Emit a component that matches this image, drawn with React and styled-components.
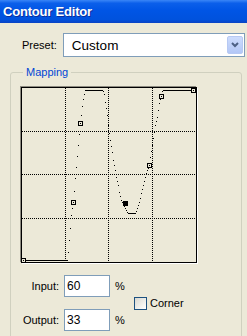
import React from 'react';
import styled, { createGlobalStyle } from 'styled-components';

const GlobalStyle = createGlobalStyle`
  html, body {
    margin: 0;
    padding: 0;
    background: #ece9d8;
    overflow: hidden;
  }
  body {
    font-family: "Liberation Sans", Arial, sans-serif;
  }
`;

const Window = styled.div`
  width: 247px;
  height: 336px;
  overflow: hidden;
  background: #ece9d8;
`;

const TitleBar = styled.div`
  height: 23px;
  padding-left: 3px;
  background: linear-gradient(to bottom, #3a86f7 0%, #0b5fea 14%, #0055e5 45%, #0052dd 85%, #0a43c4 100%);
  color: #fff;
  font: bold 13px/23px "Liberation Sans", Arial, sans-serif;
  letter-spacing: -0.2px;
  text-shadow: 1px 1px 0 #0b2f9c;
`;

const PresetRow = styled.div`
  display: flex;
  align-items: center;
  padding: 10px 0 0 22px;
`;

const Label = styled.span`
  font-size: 11px;
  color: #000;
  text-align: ${p => (p.$right ? 'right' : 'left')};
`;

const Select = styled.div`
  margin-left: 6px;
  width: 182px;
  height: 24px;
  box-sizing: border-box;
  border: 1px solid #7f9db9;
  background: #fff;
  display: flex;
  align-items: center;
`;

const SelectText = styled.span`
  flex: 1;
  padding-left: 8px;
  font-size: 13.5px;
  color: #000;
`;

const DropButton = styled.div`
  width: 16px;
  height: 18px;
  margin-right: 1px;
  box-sizing: border-box;
  border: 1px solid #b7c9f3;
  border-radius: 2px;
  background: linear-gradient(to bottom, #cddcfd, #b3c7f6);
  display: flex;
  align-items: center;
  justify-content: center;
`;

const Group = styled.fieldset`
  margin: 9px 0 0 10px;
  width: 232px;
  height: 300px;
  box-sizing: border-box;
  border: 1px solid #d0d0bf;
  border-radius: 3px;
  padding: 8px 0 0 10px;
  min-width: 0;
`;

const Legend = styled.legend`
  margin-left: 2px;
  padding: 0 3px;
  color: #0046d5;
  font-size: 11px;
  line-height: 13px;
`;

const Plot = styled.div`
  width: 174px;
  height: 174px;
  border: 1px solid #000;
  box-shadow: -1px -1px 0 #8c8a7f, 1px 1px 0 #fff;
  svg {
    display: block;
    overflow: visible;
  }
`;

const Controls = styled.div`
  display: grid;
  grid-template-columns: 38px 46px 14px auto;
  grid-template-rows: 22px 22px;
  column-gap: 5px;
  row-gap: 12px;
  align-items: center;
  margin-top: 12px;
`;

const Field = styled.input`
  width: 46px;
  height: 22px;
  box-sizing: border-box;
  border: 1px solid #7f9db9;
  padding: 0 0 0 2px;
  margin: 0;
  font: 12px "Liberation Sans", Arial, sans-serif;
  color: #000;
  background: #fff;
  outline: none;
`;

const Corner = styled.div`
  grid-column: 4;
  grid-row: 1 / span 2;
  display: flex;
  align-items: center;
  gap: 3px;
`;

const CheckBox = styled.span`
  width: 13px;
  height: 13px;
  box-sizing: border-box;
  border: 1px solid #1c5180;
  background: linear-gradient(135deg, #d8d8d1 0%, #f4f4f0 70%, #fff 100%);
`;

// curve samples in plot pixels (x, y), one dot drawn per column
const curve = [
  [0, 172], [45, 172], [46, 164], [47, 152], [48, 140], [49, 127], [50, 120], [51, 114],
  [52, 103], [53, 90], [54, 79], [55, 68], [56, 57], [57, 46], [58, 35], [59, 27],
  [60, 18], [61, 11], [62, 6], [63, 2], [80, 2], [81, 3], [82, 6], [83, 14], [84, 20],
  [85, 27], [86, 37], [87, 45], [88, 52], [89, 58], [90, 64], [91, 72], [92, 77],
  [93, 82], [94, 89], [95, 93], [96, 97], [97, 104], [98, 108], [99, 112], [100, 114],
  [101, 116], [102, 118], [103, 120], [104, 122], [105, 124], [106, 125], [113, 125],
  [114, 123], [115, 120], [116, 117], [117, 114], [118, 110], [119, 105], [120, 101],
  [121, 97], [122, 93], [123, 89], [124, 85], [125, 82], [126, 80], [127, 77], [128, 69],
  [129, 63], [130, 57], [131, 50], [132, 44], [133, 37], [134, 33], [135, 29], [136, 22],
  [137, 15], [138, 11], [139, 7], [140, 3], [141, 2], [173, 2],
];

const points = [
  [1, 172], [51, 114], [58, 35], [127, 77], [139, 8], [171, 2],
];

const selected = [103, 115];

function valueAt(x) {
  for (let i = 1; i < curve.length; i++) {
    const [x1, y1] = curve[i];
    const [x0, y0] = curve[i - 1];
    if (x <= x1) return Math.round(y0 + ((y1 - y0) * (x - x0)) / (x1 - x0));
  }
  return 2;
}

function ContourGraph() {
  const dots = [];
  for (let x = 0; x < 174; x++) dots.push([x, valueAt(x)]);
  const grid = [43, 86, 130];
  return (
    <svg width="174" height="174" viewBox="0 0 174 174" shapeRendering="crispEdges">
      {grid.map(g => (
        <line key={'v' + g} x1={g + 0.5} y1="0" x2={g + 0.5} y2="174" stroke="#000" strokeDasharray="1 1" />
      ))}
      {grid.map(g => (
        <line key={'h' + g} x1="0" y1={g + 0.5} x2="174" y2={g + 0.5} stroke="#000" strokeDasharray="1 1" />
      ))}
      {dots.map(([x, y]) => (
        <rect key={x} x={x} y={y} width="1" height="1" fill="#000" />
      ))}
      {points.map(([x, y]) => (
        <g key={x}>
          <rect x={x - 1.5} y={y - 1.5} width="4" height="4" fill="#ece9d8" stroke="#000" strokeWidth="1" />
          <rect x={x} y={y} width="1" height="1" fill="#000" />
        </g>
      ))}
      <rect x={selected[0] - 2} y={selected[1] - 2} width="5" height="5" fill="#000" />
    </svg>
  );
}

export default function App() {
  return (
    <Window>
      <GlobalStyle />
      <TitleBar>Contour Editor</TitleBar>
      <PresetRow>
        <Label>Preset:</Label>
        <Select>
          <SelectText>Custom</SelectText>
          <DropButton>
            <svg width="8" height="6" viewBox="0 0 8 6">
              <polyline points="1,1 4,4 7,1" fill="none" stroke="#4d6185" strokeWidth="2" />
            </svg>
          </DropButton>
        </Select>
      </PresetRow>
      <Group>
        <Legend>Mapping</Legend>
        <Plot>
          <ContourGraph />
        </Plot>
        <Controls>
          <Label $right>Input:</Label>
          <Field defaultValue="60" />
          <Label>%</Label>
          <Corner>
            <CheckBox />
            <Label>Corner</Label>
          </Corner>
          <Label $right>Output:</Label>
          <Field defaultValue="33" />
          <Label>%</Label>
        </Controls>
      </Group>
    </Window>
  );
}
